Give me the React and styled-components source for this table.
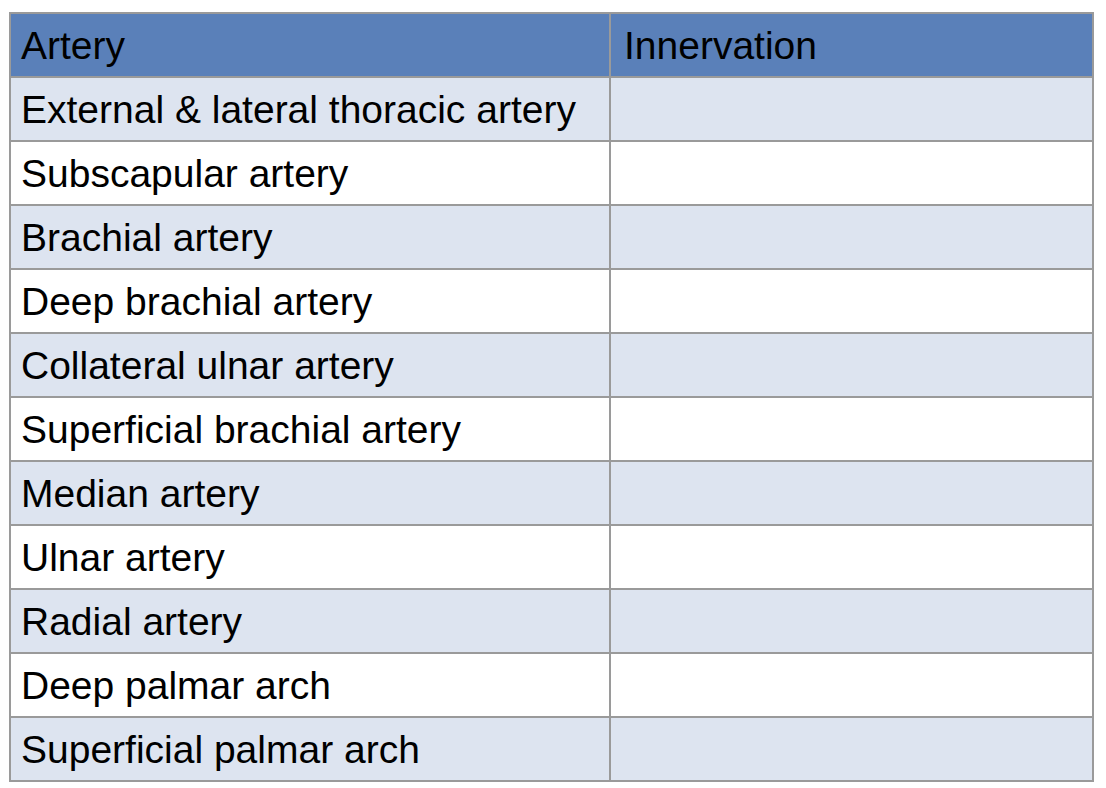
import React from "react";
import styled, { createGlobalStyle } from "styled-components";

const GlobalStyle = createGlobalStyle`
	html, body {
		margin: 0;
		background: #ffffff;
	}
	body {
		padding: 12px 0 0 9px;
		font-family: "Liberation Sans", Arial, Helvetica, sans-serif;
	}
`;

const Table = styled.table`
	border-collapse: collapse;
	width: 1085px;
	table-layout: fixed;
	font-size: 39px;
	color: #000000;
`;

const HeadCell = styled.th`
	background: #5a80b9;
	border: 2px solid #9a9a9a;
	height: 60px;
	padding: 2px 0 0 ${props => props.pad}px;
	text-align: left;
	font-weight: normal;
	width: ${props => props.w}px;
`;

const Row = styled.tr`
	background: ${props => (props.striped ? "#dde4f0" : "#ffffff")};
`;

const Cell = styled.td`
	border: 2px solid #9a9a9a;
	height: 60px;
	padding: 2px 0 0 10px;
	white-space: nowrap;
`;

const arteries = [
	"External & lateral thoracic artery",
	"Subscapular artery",
	"Brachial artery",
	"Deep brachial artery",
	"Collateral ulnar artery",
	"Superficial brachial artery",
	"Median artery",
	"Ulnar artery",
	"Radial artery",
	"Deep palmar arch",
	"Superficial palmar arch"
];

const App = () => {
	return (
		<>
			<GlobalStyle />
			<Table>
				<thead>
					<tr>
						<HeadCell w={588} pad={10}>Artery</HeadCell>
						<HeadCell w={468} pad={13}>Innervation</HeadCell>
					</tr>
				</thead>
				<tbody>
					{arteries.map((name, i) => (
						<Row key={name} striped={i % 2 === 0}>
							<Cell>{name}</Cell>
							<Cell />
						</Row>
					))}
				</tbody>
			</Table>
		</>
	);
};

export default App;
